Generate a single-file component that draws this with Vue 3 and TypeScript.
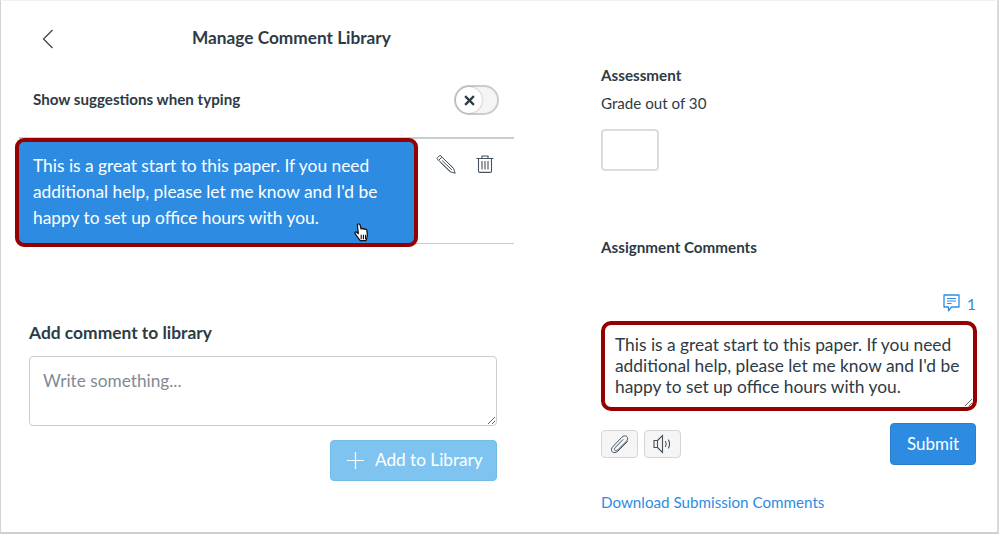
<script setup lang="ts">
const comment: string = "This is a great start to this paper. If you need additional help, please let me know and I'd be happy to set up office hours with you.";
</script>

<template>
  <div class="page">
    <section class="left">
      <header class="head">
        <svg class="back" width="12" height="20" viewBox="0 0 12 20"><path d="M10.5 1 1.5 10l9 9" fill="none" stroke="#3a4853" stroke-width="1.3"/></svg>
        <h1>Manage Comment Library</h1>
      </header>
      <div class="suggest">
        <span>Show suggestions when typing</span>
        <div class="switch">
          <div class="knob">
            <svg width="11" height="11" viewBox="0 0 10 10"><path d="M1 1l8 8M9 1 1 9" stroke="#2d3b45" stroke-width="2"/></svg>
          </div>
        </div>
      </div>
      <div class="row">
        <div class="item">
          {{ comment }}
          <svg class="hand" width="18" height="19" viewBox="0 0 16 17">
            <path d="M4.500 1c.8-.6 1.600 0 1.800.8l.9 3.600c.3-.9 1.500-.8 1.800.1.400-.7 1.500-.5 1.700.3.500-.5 1.500-.2 1.600.6l.5 4.200c.1 1.700-.4 3-1.200 5.200H6.400L2.900 11C1.900 9.700 1.200 8.600 2.100 8c.8-.5 1.700.5 2.600 1.500L3.900 2.400c-.1-.6.100-1.100.6-1.400z" fill="#fff" stroke="#111" stroke-width="1.100" stroke-linejoin="round"/>
            <path d="M7.300 10.500v4M9.300 10.500v4M11.200 10.500v4" stroke="#111" stroke-width="1"/>
          </svg>
        </div>
        <div class="actions">
          <svg width="20" height="20" viewBox="0 0 20 20" fill="none" stroke="#46535d" stroke-width="1" stroke-linejoin="round">
            <path d="M.8 4.500 4 1.200 17.500 14.300l1.700 5-5-1.600z"/>
            <path d="M2.600 6.400 5.900 3.100M4.500 8.300l9.700 9.400M7.900 5l9.600 9.300M6.200 6.600l9.700 9.300"/>
          </svg>
          <svg class="trash" width="18" height="18" viewBox="0 0 18 18" fill="none" stroke="#46535d" stroke-width="1.100">
            <path d="M.5 3.500h17M6 3.500V1h6v2.500M2.500 3.500v12.500c0 .8.500 1.400 1.300 1.400h10.400c.8 0 1.300-.6 1.300-1.400V3.500M6 6v8.500M9 6v8.500M12 6v8.500"/>
          </svg>
        </div>
      </div>
      <h2>Add comment to library</h2>
      <textarea class="lib-input" placeholder="Write something..."></textarea>
      <div class="add-wrap">
        <button class="add">
          <svg width="17" height="17" viewBox="0 0 17 17"><path d="M8.500 0v17M0 8.500h17" stroke="#fff" stroke-width="1.200"/></svg>
          <span>Add to Library</span>
        </button>
      </div>
    </section>

    <section class="right">
      <h3 class="assess">Assessment</h3>
      <p class="grade">Grade out of 30</p>
      <input class="grade-input" type="text" />
      <h3 class="comments">Assignment Comments</h3>
      <div class="count">
        <svg width="17" height="18" viewBox="0 0 17 18" fill="none" stroke="#2d8ce2" stroke-width="1.300">
          <path d="M1 1h15v12H8.500l-3 3.800V13H1z" stroke-linejoin="round"/>
          <path d="M4 4.500h9M4 7h9M4 9.500h4.500" stroke-width="1"/>
        </svg>
        <span>1</span>
      </div>
      <textarea class="reply" :value="comment"></textarea>
      <div class="tools">
        <div class="tool-group">
          <button class="tool">
            <svg width="20" height="20" viewBox="0 0 20 20" fill="none" stroke="#46535d" stroke-width="1" stroke-linecap="round">
              <path d="M17.500 7.500 8 17c-1.700 1.800-4.300 2.200-5.700.9C1 16.500 1.300 14 3.100 12.300l8.700-9c1.500-1.500 3.700-2 5-.8 1.300 1.200 1 3.200-.4 4.700L7.900 15.800c-1 1-2.300 1.200-3 .5-.7-.7-.5-2 .5-3l7.500-7.700"/>
            </svg>
          </button>
          <button class="tool">
            <svg width="20" height="20" viewBox="0 0 20 20" fill="none" stroke="#46535d" stroke-width="1.100">
              <path d="M1 6.500h3.500v7H1zM4.500 6.500 9.500 1.500v17l-5-5"/>
              <path d="M12.500 7.500c.9 1.500.9 3.500 0 5M15.500 6c1.300 2.400 1.300 5.600 0 8" stroke-linecap="round"/>
            </svg>
          </button>
        </div>
        <button class="submit">Submit</button>
      </div>
      <a class="download">Download Submission Comments</a>
    </section>
  </div>
</template>

<style>
html, body { margin: 0; background: #fff; }
</style>

<style scoped>
.page {
  box-sizing: border-box;
  width: 999px;
  height: 534px;
  display: grid;
  grid-template-columns: 600px 1fr;
  border-left: 1px solid #d4d4d4;
  border-right: 2px solid #d9d9d9;
  border-bottom: 2px solid #cfcfcf;
  border-top: 1px solid #f2f2f2;
  background: #fff;
  font-family: "Lato", "Liberation Sans", sans-serif;
  color: #2d3b45;
  overflow: hidden;
}
h1, h2, h3, p { margin: 0; }
button { font-family: inherit; }

.left { display: flex; flex-direction: column; padding-left: 18px; width: 495px; }
.head { display: flex; align-items: center; height: 74px; padding-left: 23px; }
.back { margin-top: 1px; }
h1 { font-size: 17.25px; font-weight: 700; margin-left: 138px; margin-top: -1px; }

.suggest {
  display: flex; align-items: center; justify-content: space-between;
  width: 480px;
  padding-left: 14px;
  box-sizing: border-box;
  height: 50px;
  font-size: 15.15px; font-weight: 700;
}
.suggest span { margin-top: -2px; }
.switch {
  box-sizing: border-box;
  width: 45px; height: 30px;
  border: 2px solid #c7cdd1;
  border-radius: 15px;
  background: #f5f5f5;
  display: flex; align-items: center;
}
.knob {
  width: 26px; height: 26px; border-radius: 50%;
  background: #fff;
  display: flex; align-items: center; justify-content: center;
  box-shadow: 0 0 2px rgba(0,0,0,.35);
}

.row {
  display: flex;
  width: 495px;
  height: 104px;
  margin-top: 12px;
  border-top: 2px solid #c7cdd1;
  border-bottom: 1px solid #c7cdd1;
  position: relative;
}
.item {
  box-sizing: border-box;
  width: 403px;
  height: 109px;
  margin: -1px 0 0 -4px;
  padding: 11px 10px 0 14px;
  background: #2d8ce2;
  border: 4px solid #960000;
  border-radius: 9px;
  color: #fff;
  font-size: 17.35px;
  line-height: 26px;
  position: relative;
}
.hand { position: absolute; left: 334px; top: 81px; }
.actions { display: flex; gap: 20px; margin: 15px 0 0 18px; align-items: flex-start; }
.trash { margin-top: 1px; }

h2 { font-size: 17.4px; font-weight: 700; margin: 77px 0 0 10px; line-height: 24px; }
.lib-input {
  display: block;
  box-sizing: border-box;
  width: 468px; height: 70px;
  margin: 11px 0 0 10px;
  padding: 12px 13px;
  border: 1px solid #c7cdd1;
  border-radius: 4px;
  font-family: inherit;
  font-size: 17.25px;
  line-height: 24px;
  color: #2d3b45;
  outline: none;
}
.lib-input::placeholder { color: #7f8b93; opacity: 1; }
.add-wrap { display: flex; justify-content: flex-end; width: 478px; margin-top: 14px; }
.add {
  box-sizing: border-box;
  width: 167px; height: 41px;
  display: flex; align-items: center; gap: 11px;
  padding: 0 0 0 16px;
  background: #7fc4f0;
  border: 1px solid #73bbe8;
  border-radius: 4px;
  color: #fff;
  font-size: 17.2px;
}
.add span { margin-top: -3px; }

.right { display: flex; flex-direction: column; align-items: flex-start; width: 376px; }
.assess { font-size: 15.2px; font-weight: 700; line-height: 20px; margin-top: 64px; }
.grade { font-size: 15.15px; line-height: 20px; margin-top: 8px; }
.grade-input {
  box-sizing: border-box;
  width: 58px; height: 42px;
  margin-top: 16px;
  border: 2px solid #dcdcdc;
  border-radius: 4px;
  outline: none;
}
.comments { font-size: 15.2px; font-weight: 700; line-height: 20px; margin-top: 66px; }
.count {
  display: flex; align-items: center; justify-content: flex-end; gap: 7px;
  width: 375px; height: 20px;
  margin-top: 36px;
  color: #2d8ce2;
  font-size: 16px;
}
.reply {
  display: block;
  box-sizing: border-box;
  width: 376px; height: 90px;
  margin-top: 8px;
  padding: 9px 6px 0 10px;
  border: 4px solid #960000;
  border-radius: 10px;
  font-family: inherit;
  font-size: 17.35px;
  line-height: 21px;
  color: #2d3b45;
  outline: none;
  overflow: hidden;
}
.tools { display: flex; justify-content: space-between; align-items: flex-start; width: 375px; margin-top: 12px; }
.tool-group { display: flex; gap: 6px; margin-top: 7px; }
.tool {
  box-sizing: border-box;
  width: 37px; height: 28px;
  display: flex; align-items: center; justify-content: center;
  padding: 0;
  background: #f5f5f5;
  border: 1px solid #d2d6d9;
  border-radius: 4px;
}
.submit {
  box-sizing: border-box;
  width: 86px; height: 42px;
  padding-bottom: 2px;
  background: #2d8ce2;
  border: 1px solid #2a7fcc;
  border-radius: 4px;
  color: #fff;
  font-size: 17px;
}
.download { margin-top: 27px; color: #2d8ce2; font-size: 15.2px; line-height: 20px; }
</style>
